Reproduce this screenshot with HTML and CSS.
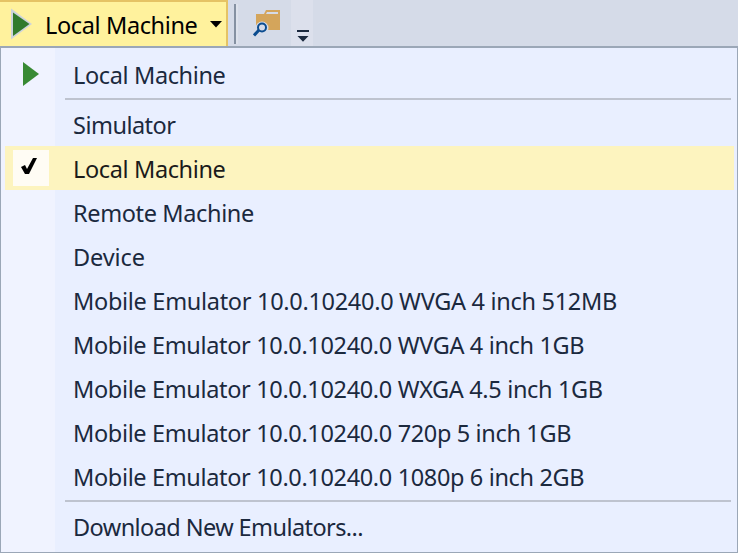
FILE: index.html
```html
<!DOCTYPE html>
<html lang="en">
<head>
<meta charset="utf-8">
<title>Debug target</title>
<link rel="stylesheet" href="styles.css">
</head>
<body>
<header class="toolbar">
  <button class="target">
    <svg class="run" width="22" height="32" viewBox="0 0 22 32"><path d="M0 0.5V31.5L21 16z" fill="#cdd3dc"/><path d="M2 4.5V28L18.500 16z" fill="#317a2d"/></svg>
    <span class="target-name">Local Machine</span>
    <svg class="caret" width="12" height="7" viewBox="0 0 12 7"><path d="M0 0H12L6 6.500z" fill="#000"/></svg>
  </button>
  <span class="divider"></span>
  <svg class="find" width="28" height="29" viewBox="0 0 28 29"><path d="M3 5H11L13 1H27V21H3z" fill="#d4a55b"/><path d="M14 3H25V5H13z" fill="#d5dbe8"/><circle cx="9" cy="19" r="6.500" fill="#d5dbe8"/><path d="M6 21L1 26.500" stroke="#0b4c8f" stroke-width="3"/><circle cx="9" cy="18.500" r="4" fill="#d5dbe8" stroke="#0b4c8f" stroke-width="2"/></svg>
  <span class="overflow"><svg width="12" height="12" viewBox="0 0 12 12"><path d="M0 0H12V2H0zM0.500 6H11.500L6 11.800z" fill="#1b293e"/></svg></span>
</header>
<ul class="menu">
  <li class="item"><span class="gutter"><svg class="play" width="16" height="24" viewBox="0 0 16 24"><path d="M0 0V24L16 12z" fill="#388a34"/></svg></span><span class="label short">Local Machine</span></li>
  <li class="rule"></li>
  <li class="item"><span class="gutter"></span><span class="label sim">Simulator</span></li>
  <li class="item selected"><span class="gutter"><span class="check"><svg width="16" height="17" viewBox="0 0 16 17"><path d="M0 9L4 7L6 11L12 0H16L8 16H4z" fill="#000"/></svg></span></span><span class="label short">Local Machine</span></li>
  <li class="item"><span class="gutter"></span><span class="label short">Remote Machine</span></li>
  <li class="item"><span class="gutter"></span><span class="label device">Device</span></li>
  <li class="item"><span class="gutter"></span><span class="label">Mobile Emulator 10.0.10240.0 WVGA 4 inch 512MB</span></li>
  <li class="item"><span class="gutter"></span><span class="label long">Mobile Emulator 10.0.10240.0 WVGA 4 inch 1GB</span></li>
  <li class="item"><span class="gutter"></span><span class="label long">Mobile Emulator 10.0.10240.0 WXGA 4.5 inch 1GB</span></li>
  <li class="item"><span class="gutter"></span><span class="label long">Mobile Emulator 10.0.10240.0 720p 5 inch 1GB</span></li>
  <li class="item"><span class="gutter"></span><span class="label long">Mobile Emulator 10.0.10240.0 1080p 6 inch 2GB</span></li>
  <li class="rule"></li>
  <li class="item"><span class="gutter"></span><span class="label download">Download New Emulators...</span></li>
</ul>
</body>
</html>
```
FILE: styles.css
```css
* { box-sizing: border-box; }
body { margin: 0; width: 738px; height: 553px; overflow: hidden; background: #d5dbe8; color: #1b293e; font: 23.5px/44px "Segoe UI", "Noto Sans", sans-serif; }
svg { display: block; flex: none; }
.toolbar { display: flex; height: 46px; background: #d5dbe8; }
.target { display: flex; width: 228px; height: 46px; margin: 0; padding: 0 0 0 11px; border: solid #e5c365; border-width: 2px 2px 0 0; border-radius: 0; background: #fff29d; color: #000; font: inherit; }
.run { margin-top: 6px; }
.target-name { width: 154px; margin: 1px 0 0 12px; text-align: left; white-space: nowrap; letter-spacing: -0.37px; }
.caret { margin: 19px 0 0 11px; }
.divider { width: 4px; height: 40px; margin: 4px 0 0 6px; border-left: 2px solid #8591a2; border-right: 2px solid #dde2ec; }
.find { margin: 9px 0 0 15px; }
.overflow { width: 22px; height: 46px; margin-left: 10px; padding: 30px 0 0 6px; background: #dce0ec; }
.menu { list-style: none; height: 507px; margin: 0; padding: 4px 3px 0 4px; border: 1px solid #9ba7b7; border-top-width: 2px; background: linear-gradient(90deg, #f0f3ff 54px, #e9efff 54px); }
.item { display: flex; height: 44px; }
.selected { background: #fdf4bf; color: #1b1b1b; }
.gutter { width: 68px; flex: none; }
.play { margin: 10px 0 0 18px; }
.check { display: block; width: 36px; height: 36px; margin: 4px 0 0 8px; padding: 8px 0 0 8px; background: #fffcf4; }
.label { white-space: pre; letter-spacing: -0.3px; margin-top: 1px; }
.short { letter-spacing: -0.37px; }
.sim { letter-spacing: -0.52px; }
.device { letter-spacing: -0.1px; }
.long { letter-spacing: -0.35px; }
.download { letter-spacing: -0.58px; }
.rule { height: 2px; margin: 2px 3px 2px 60px; background: #bec3cf; }
```
